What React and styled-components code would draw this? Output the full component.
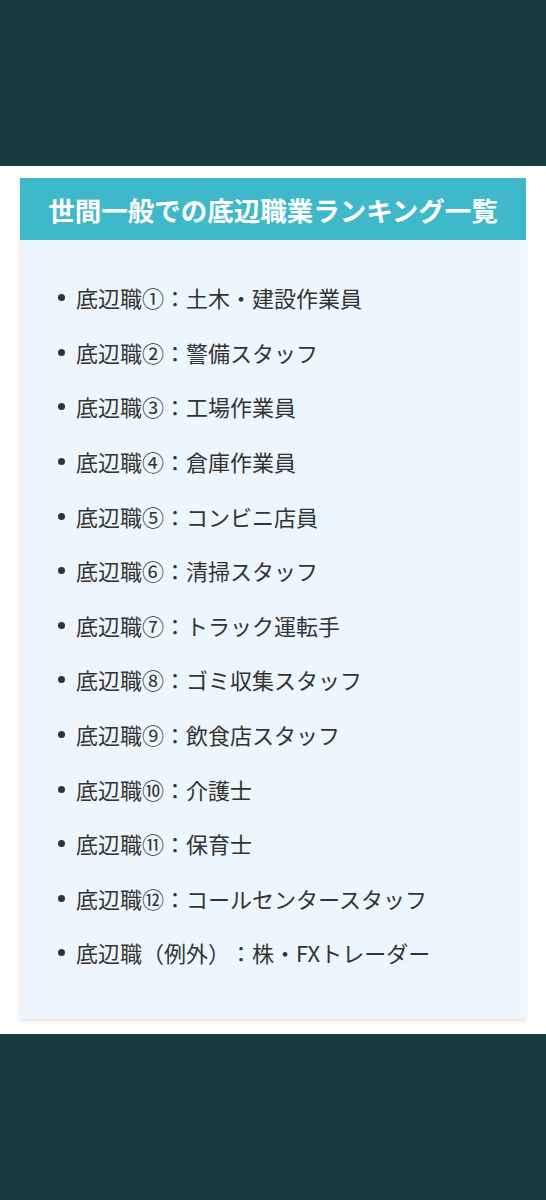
import React from "react";
import styled, { createGlobalStyle } from "styled-components";

const Global = createGlobalStyle`
  html, body { margin: 0; padding: 0; background: #ffffff; }
  body {
    font-family: "Noto Sans CJK JP", "Noto Sans", sans-serif;
    text-spacing-trim: space-all;
  }
`;

const Page = styled.div`
  display: flex;
  flex-direction: column;
  min-height: 1200px;
`;

const DarkBand = styled.div`
  background: #163a40;
  height: ${(p) => p.$h}px;
  flex: ${(p) => (p.$grow ? 1 : "none")};
`;

const WhiteArea = styled.div`
  background: #ffffff;
  padding: 12px 20px 15px;
`;

const Box = styled.div`
  background: #edf5fd;
  box-shadow: 0 2px 4px rgba(0, 0, 0, 0.12);
`;

const Header = styled.div`
  background: #3fb9c9;
  height: 62px;
  display: flex;
  align-items: center;
  justify-content: center;
  color: #ffffff;
  font-weight: 700;
  font-size: 26.5px;
`;

const List = styled.ul`
  list-style: none;
  margin: 0;
  padding: 30px 20px 39px 38px;
`;

const Item = styled.li`
  position: relative;
  height: 54.6px;
  display: flex;
  align-items: center;
  padding-left: 18px;
  font-size: 22px;
  color: #333333;
  text-spacing-trim: space-all;
  &::before {
    content: "";
    position: absolute;
    left: 0;
    top: 50%;
    width: 7px;
    height: 7px;
    margin-top: -3px;
    border-radius: 50%;
    background: #333333;
  }
`;

const items = [
  "底辺職①：土木・建設作業員",
  "底辺職②：警備スタッフ",
  "底辺職③：工場作業員",
  "底辺職④：倉庫作業員",
  "底辺職⑤：コンビニ店員",
  "底辺職⑥：清掃スタッフ",
  "底辺職⑦：トラック運転手",
  "底辺職⑧：ゴミ収集スタッフ",
  "底辺職⑨：飲食店スタッフ",
  "底辺職⑩：介護士",
  "底辺職⑪：保育士",
  "底辺職⑫：コールセンタースタッフ",
  "底辺職（例外）：株・FXトレーダー",
];

export default function App() {
  return (
    <Page>
      <Global />
      <DarkBand $h={166} />
      <WhiteArea>
        <Box>
          <Header>世間一般での底辺職業ランキング一覧</Header>
          <List>
            {items.map((t) => (
              <Item key={t}>{t}</Item>
            ))}
          </List>
        </Box>
      </WhiteArea>
      <DarkBand $grow />
    </Page>
  );
}
